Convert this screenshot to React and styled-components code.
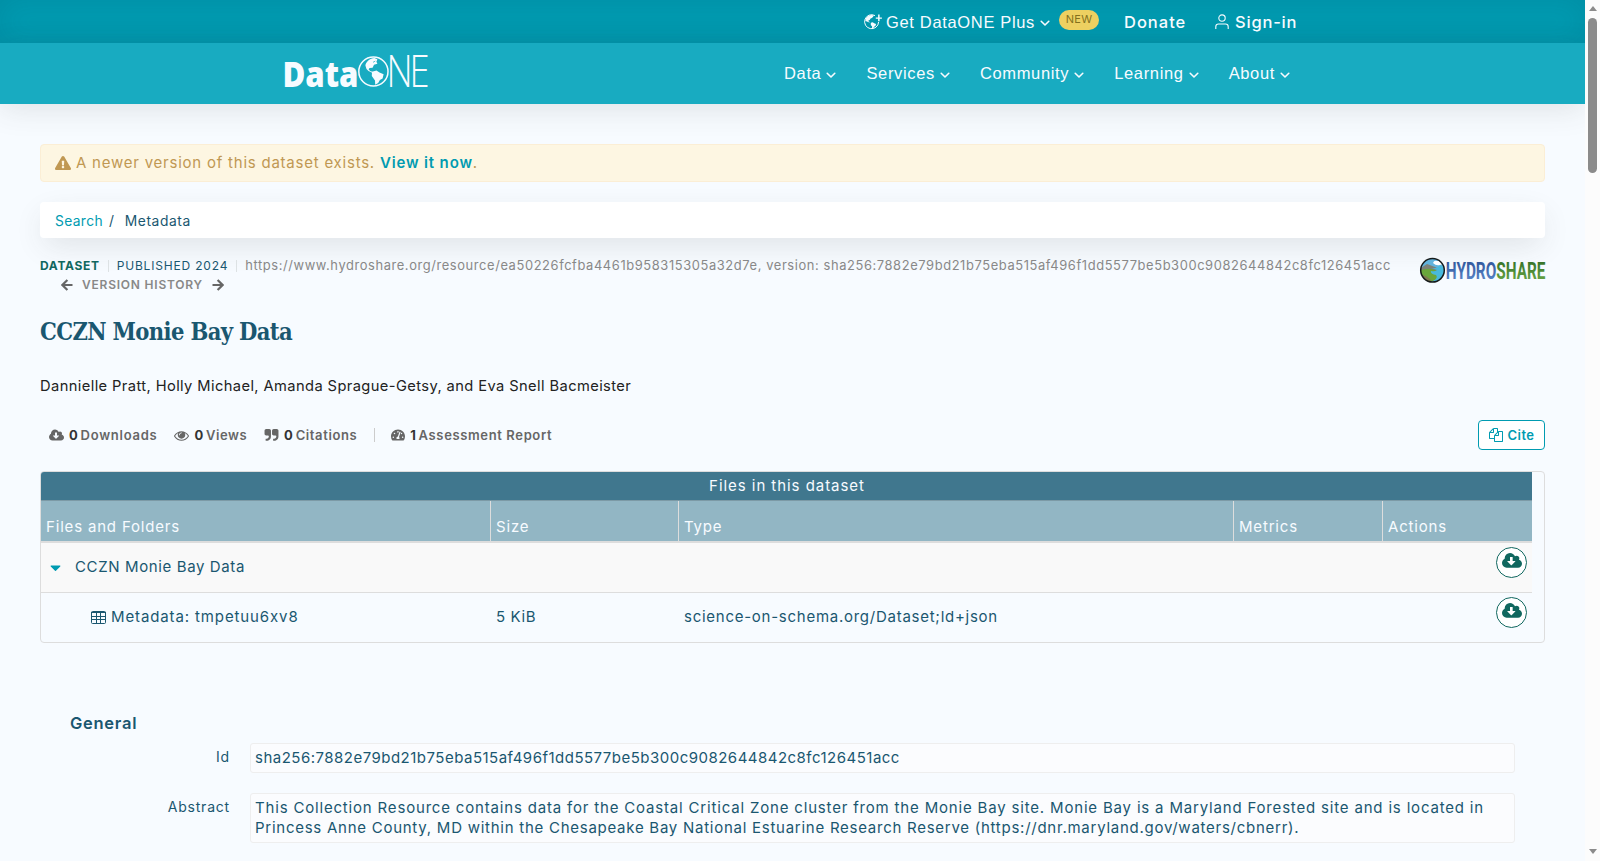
import React from 'react'
import styled, { createGlobalStyle } from 'styled-components';
import { FaCaretDown, FaExclamationTriangle, FaTachometerAlt } from 'react-icons/fa';

const paths = {
  cloud: ['0 0 1920 1792', 'M1280 928q0-14-9-23t-23-9h-224v-352q0-13-9.5-22.5t-22.5-9.5h-192q-13 0-22.5 9.5t-9.5 22.5v352h-224q-13 0-22.5 9.5t-9.5 22.5q0 14 9 23l352 352q9 9 23 9t23-9l351-351q10-12 10-24zm640 224q0 159-112.5 271.5t-271.5 112.5h-1088q-185 0-316.5-131.5t-131.5-316.5q0-130 70-240t188-165q-2-30-2-43 0-212 150-362t362-150q156 0 285.5 87t188.5 231q71-62 166-62 106 0 181 75t75 181q0 76-41 138 130 31 213.5 135.5t83.5 238.5z'],
  files: ['0 0 1792 1792', 'M1696 384q40 0 68 28t28 68v1216q0 40-28 68t-68 28h-960q-40 0-68-28t-28-68v-288h-544q-40 0-68-28t-28-68v-672q0-40 20-88t48-76l408-408q28-28 76-48t88-20h416q40 0 68 28t28 68v328q68-40 128-40h416zm-544 213l-299 299h299v-299zm-640-384l-299 299h299v-299zm196 647l316-316v-416h-384v416q0 40-28 68t-68 28h-416v640h512v-256q0-40 20-88t48-76zm956 804v-1152h-384v416q0 40-28 68t-68 28h-416v640h896z'],
  eye: ['0 0 1792 1792', 'M1664 960q-152-236-381-353 61 104 61 225 0 185-131.5 316.5t-316.5 131.5-316.5-131.5-131.5-316.5q0-121 61-225-229 117-381 353 133 205 333.5 326.5t434.5 121.5 434.5-121.5 333.5-326.5zm-720-384q0-20-14-34t-34-14q-125 0-214.5 89.5t-89.5 214.5q0 20 14 34t34 14 34-14 14-34q0-86 61-147t147-61q20 0 34-14t14-34zm848 384q0 34-20 69-140 230-376.5 368.5t-499.5 138.5-499.5-139-376.5-368q-20-35-20-69t20-69q140-229 376.5-368t499.5-139 499.5 139 376.5 368q20 35 20 69z'],
  quote: ['0 0 1792 1792', 'M832 320v704q0 104-40.5 198.5t-109.5 163.5-163.5 109.5-198.5 40.5h-64q-26 0-45-19t-19-45v-128q0-26 19-45t45-19h64q106 0 181-75t75-181v-32q0-40-28-68t-68-28h-224q-80 0-136-56t-56-136v-384q0-80 56-136t136-56h384q80 0 136 56t56 136zm896 0v704q0 104-40.5 198.5t-109.5 163.5-163.5 109.5-198.5 40.5h-64q-26 0-45-19t-19-45v-128q0-26 19-45t45-19h64q106 0 181-75t75-181v-32q0-40-28-68t-68-28h-224q-80 0-136-56t-56-136v-384q0-80 56-136t136-56h384q80 0 136 56t56 136z'],
};

function Icon({ name, size }) {
  const [box, d] = paths[name];
  return (
    <svg viewBox={box} width={size} height={size} fill="currentColor">
      <path d={d} />
    </svg>
  );
}

function Chevron() {
  return (
    <ChevronSvg viewBox="0 0 10 7" width="10" height="7">
      <path d="M1.2 1.3 5 5l3.8-3.7" fill="none" stroke="currentColor" strokeWidth="1.6" strokeLinecap="round" strokeLinejoin="round" />
    </ChevronSvg>
  );
}

function HistoryArrow({ right }) {
  return (
    <svg viewBox="0 0 12 12" width="12" height="12" fill="none" stroke="currentColor" strokeWidth="2.2">
      <path d={right ? 'M.5 6h9.6M5.6 1l5 5-5 5' : 'M11.5 6H1.9M6.4 1l-5 5 5 5'} />
    </svg>
  );
}

function GlobePlus() {
  return (
    <svg viewBox="0 0 18 16" width="18" height="16" fill="currentColor">
      <path d="M11 1.6A7 7 0 1 0 14.6 8" fill="none" stroke="currentColor" strokeWidth="1" />
      <path d="M1.4 6C2 3.3 4.4 1.2 7.6 1.1l2.2.5-.9 1.5-1 1-1.3.4-.9 1.5-1.3.4.2 1 1.3.7-.5.5-2-.9L1.6 7z" />
      <path d="M6.8 8.7l1.9-.5 1.5 1 1.9.7-.7 2-1.3.9-.9 1.6-1.2.3.1-2.1-1.3-1.6z" />
      <path d="M14.1.4h1.5v3h2.3v1.4h-2.3v2.5h-1.5V4.8h-2.3V3.4h2.3z" />
    </svg>
  );
}

function Person() {
  return (
    <svg viewBox="0 0 14 16" width="14" height="16" fill="none" stroke="currentColor" strokeWidth="1.1">
      <circle cx="7" cy="4.1" r="3.2" />
      <path d="M.8 15v-2.3q0-2.7 2.7-2.7h7q2.7 0 2.7 2.7V15" />
    </svg>
  );
}

function DataOneLogo() {
  return (
    <LogoSvg width="145" height="36" viewBox="0 0 145 36" fill="#f7fbff">
      <text x="-2.6" y="33.6" fontFamily="Open Sans, sans-serif" fontWeight="800" fontSize="35" textLength="76" lengthAdjust="spacingAndGlyphs">Data</text>
      <circle cx="88.4" cy="18.5" r="14.6" fill="#18abc1" stroke="#f7fbff" strokeWidth="1.5" />
      <path d="M80.4 12.5c.3-3.5 4.5-7.3 9-7.5l3 1.2-1 2.6 1 2-3.4 1-1.4 3-3 .3-1 1.2 1.5 1.8 2.4.6-.4 1-3.6-1.6-2-2.2z" />
      <path d="M87 18.8l4.5-1.2 3 1.8 4.1 1.8-1 4.2-2.7 1.6-1.7 3-3 1.8-.2-4.4-3.2-4.3z" />
      <path d="M88 9.3l2.3-1.2M92.2 7l1.8 1.7" stroke="#18abc1" strokeWidth=".7" />
      <text transform="translate(101.6 33.6) scale(.835 1)" fontFamily="Open Sans, sans-serif" fontWeight="300" fontSize="43.5" letterSpacing="-4">NE</text>
    </LogoSvg>
  );
}

function HydroShareLogo() {
  return (
    <LogoSvg width="126" height="27" viewBox="0 0 126 27">
      <defs>
        <linearGradient id="hydro" x1="0" y1="0" x2="0" y2="1">
          <stop offset=".2" stopColor="#345a9f" />
          <stop offset=".85" stopColor="#5a86c8" />
        </linearGradient>
        <linearGradient id="share" x1="0" y1="0" x2="0" y2="1">
          <stop offset=".2" stopColor="#39762c" />
          <stop offset=".85" stopColor="#68a544" />
        </linearGradient>
        <clipPath id="disc"><circle cx="13.5" cy="14.3" r="11.6" /></clipPath>
      </defs>
      <g clipPath="url(#disc)">
        <rect width="27" height="27" fill="#62b3dc" />
        <path d="M0 13 8 8l8 3 6 3v12H0z" fill="#7d8177" />
        <path d="M0 15q9-4 17-.5l6 2.5-4 5-9 5H0z" fill="#69a63b" />
        <path d="M12 12q7 1 8-3l6 3v9l-6 6-9-1q9-3 6-7-6-1-5-4 4 1 6-1z" fill="#48b9dc" />
        <path d="M0 18q7 1 12 6l-1 3H0z" fill="#7f7a50" />
        <path d="M14 7q1-3 4-2 4-1 6 3l-3 1q-4 1-7-2z" fill="#fff" />
      </g>
      <circle cx="13.5" cy="14.3" r="11.8" fill="none" stroke="#161b1b" strokeWidth="1.5" />
      <text x="26.8" y="23.2" fontFamily="Roboto, sans-serif" fontWeight="700" fontSize="24" textLength="99.6" lengthAdjust="spacingAndGlyphs">
        <tspan fill="url(#hydro)">HYDRO</tspan><tspan fill="url(#share)">SHARE</tspan>
      </text>
    </LogoSvg>
  );
}

function GridIcon() {
  return (
    <svg width="15" height="13" viewBox="0 0 15 13">
      <rect x=".5" y=".5" width="14" height="12" rx="1" fill="none" stroke="currentColor" />
      <path d="M0 1.5h15M0 5.5h15M0 8.5h15M5.5 2v11M9.5 2v11" fill="none" stroke="currentColor" />
    </svg>
  );
}

function App() {
  return (
    <Window>
      <GlobalStyle />
      <Page>
        <TopBar>
          <PlusLink><GlobePlus /><NavText $ls={0.66}>Get DataONE Plus</NavText><Chevron /></PlusLink>
          <NewBadge>NEW</NewBadge>
          <DonateLink>Donate</DonateLink>
          <SignIn><Person />Sign-in</SignIn>
        </TopBar>
        <NavBar>
          <DataOneLogo />
          <Menu>
            <MenuItem><NavText>Data</NavText><Chevron /></MenuItem>
            <MenuItem><NavText>Services</NavText><Chevron /></MenuItem>
            <MenuItem><NavText>Community</NavText><Chevron /></MenuItem>
            <MenuItem><NavText>Learning</NavText><Chevron /></MenuItem>
            <MenuItem><NavText>About</NavText><Chevron /></MenuItem>
          </Menu>
        </NavBar>
        <Content>
          <Alert>
            <FaExclamationTriangle size={16} />
            <span>A newer version of this dataset exists. <ViewLink>View it now</ViewLink>.</span>
          </Alert>
          <Breadcrumb>
            <Crumb $link $ls={0.36}>Search</Crumb>
            <Slash>/</Slash>
            <Crumb $ls={0.6}>Metadata</Crumb>
          </Breadcrumb>
          <MetaRow>
            <MetaText>
              <MetaLine>
                <Kind>DATASET</Kind>
                <Bar />
                <Published>PUBLISHED 2024</Published>
                <Bar />
                <Identifier>https://www.hydroshare.org/resource/ea50226fcfba4461b958315305a32d7e, version: sha256:7882e79bd21b75eba515af496f1dd5577be5b300c9082644842c8fc126451acc</Identifier>
              </MetaLine>
              <History><HistoryArrow /><span>VERSION HISTORY</span><HistoryArrow right /></History>
            </MetaText>
            <HydroShareLogo />
          </MetaRow>
          <Title>CCZN Monie Bay Data</Title>
          <Authors>Dannielle Pratt, Holly Michael, Amanda Sprague-Getsy, and Eva Snell Bacmeister</Authors>
          <Stats>
            <Stat><Icon name="cloud" size={15} /><Count>0</Count><Label $ls={0.75}>Downloads</Label></Stat>
            <Stat><Icon name="eye" size={15} /><Count>0</Count><Label>Views</Label></Stat>
            <Stat><Icon name="quote" size={15} /><Count>0</Count><Label $ls={0.6}>Citations</Label></Stat>
            <StatBar />
            <Stat><FaTachometerAlt size={14} /><Count>1</Count><Label $ls={0.63}>Assessment Report</Label></Stat>
            <CiteButton><Icon name="files" size={14} />Cite</CiteButton>
          </Stats>
          <TableFrame>
            <TableTitle>Files in this dataset</TableTitle>
            <HeadRow>
              <HeadCell>Files and Folders</HeadCell>
              <HeadCell>Size</HeadCell>
              <HeadCell>Type</HeadCell>
              <HeadCell>Metrics</HeadCell>
              <HeadCell>Actions</HeadCell>
            </HeadRow>
            <Row $folder>
              <NameCell $ls={0.62}><Caret><FaCaretDown size={17} /></Caret>CCZN Monie Bay Data</NameCell>
              <Cell /><Cell /><Cell />
              <ActionCell><Download><Icon name="cloud" size={20} /></Download></ActionCell>
            </Row>
            <Row>
              <NameCell $child $ls={0.88}><GridIcon />Metadata: tmpetuu6xv8</NameCell>
              <Cell $ls={0.6}>5 KiB</Cell>
              <Cell $ls={0.74}>science-on-schema.org/Dataset;ld+json</Cell>
              <Cell />
              <ActionCell><Download><Icon name="cloud" size={20} /></Download></ActionCell>
            </Row>
          </TableFrame>
          <Section>
            <SectionTitle>General</SectionTitle>
            <Field>
              <FieldLabel>Id</FieldLabel>
              <FieldValue $ls={0.485}>sha256:7882e79bd21b75eba515af496f1dd5577be5b300c9082644842c8fc126451acc</FieldValue>
            </Field>
            <Field>
              <FieldLabel>Abstract</FieldLabel>
              <FieldValue $ls={0.82}>
                This Collection Resource contains data for the Coastal Critical Zone cluster from the Monie Bay site. Monie Bay is a Maryland Forested site and is located in<br />
                <Tight>Princess Anne County, MD within the Chesapeake Bay National Estuarine Research Reserve (https://dnr.maryland.gov/waters/cbnerr).</Tight>
              </FieldValue>
            </Field>
          </Section>
        </Content>
      </Page>
      <Scrollbar>
        <Arrow />
        <Thumb />
        <Arrow $down />
      </Scrollbar>
    </Window>
  );
}
export default App;

const GlobalStyle = createGlobalStyle`
  * { box-sizing: border-box; }
  body { margin: 0; overflow: hidden; }
  svg { flex: none; display: block; }
`;
const Window = styled.div`
  display: flex;
  width: 1600px;
  height: 861px;
  overflow: hidden;
  background: #fcfcfc;
`;
const Page = styled.div`
  width: 1585px;
  height: 861px;
  overflow: hidden;
  background: #f7fbff;
  color: #1a5770;
  font: 400 15px/20px Inter, sans-serif;
  letter-spacing: 0.8px;
  white-space: nowrap;
`;
const LogoSvg = styled.svg`
  overflow: visible;
  letter-spacing: 0;
`;
const TopBar = styled.div`
  display: flex;
  align-items: center;
  height: 43px;
  padding-left: 864px;
  color: #f7fbff;
  background: #009bb1;
  box-shadow: inset 0 0 30px rgba(0, 80, 100, 0.17);
`;
const NavText = styled.span`
  font: 400 16.5px/20px "Liberation Sans", Arial, sans-serif;
  letter-spacing: ${p => p.$ls || 0.65}px;
`;
const ChevronSvg = styled.svg`
  margin-top: 4px;
`;
const PlusLink = styled.div`
  display: flex;
  align-items: center;
  width: 195px;
  gap: 4px;
  ${ChevronSvg} { margin-left: 1px; }
`;
const NewBadge = styled.div`
  width: 40px;
  height: 20px;
  margin-top: -3px;
  border-radius: 10px;
  background: #edd061;
  color: #83701d;
  font-size: 11px;
  line-height: 19px;
  letter-spacing: 0.2px;
  text-align: center;
`;
const DonateLink = styled.div`
  width: 91px;
  margin: 1px 0 0 25px;
  font-size: 16.5px;
  font-weight: 500;
  letter-spacing: 1px;
`;
const SignIn = styled.div`
  display: flex;
  align-items: center;
  gap: 6px;
  font-size: 16.5px;
  font-weight: 500;
  letter-spacing: 0.8px;
`;
const NavBar = styled.div`
  display: flex;
  justify-content: space-between;
  height: 61px;
  padding: 10px 295px 0 285px;
  color: #f7fbff;
  background: #18abc1;
  box-shadow: 0 5px 30px rgba(60, 60, 60, 0.13);
`;
const Menu = styled.div`
  display: flex;
  gap: 30px;
  height: 40px;
`;
const MenuItem = styled.div`
  display: flex;
  align-items: center;
  gap: 5px;
`;
const Content = styled.div`
  display: flex;
  flex-direction: column;
  padding: 40px 40px 0;
`;
const Alert = styled.div`
  display: flex;
  align-items: center;
  gap: 5px;
  height: 38px;
  padding-left: 14px;
  border: 1px solid #fbeed5;
  border-radius: 4px;
  background: #fdf6e2;
  color: #c09853;
  letter-spacing: 0.77px;
`;
const ViewLink = styled.b`
  color: #009bb1;
  font-weight: 600;
  letter-spacing: 0.85px;
`;
const Breadcrumb = styled.div`
  display: flex;
  align-items: center;
  height: 36px;
  margin-top: 20px;
  padding: 1px 0 0 15px;
  border-radius: 4px;
  background: #fff;
  font-size: 13.8px;
  box-shadow: 0 10px 30px -5px rgba(60, 60, 60, 0.15);
`;
const Crumb = styled.span`
  color: ${p => p.$link ? '#009bb1' : '#1a5770'};
  letter-spacing: ${p => p.$ls}px;
`;
const Slash = styled.span`
  margin: 0 10px 0 6px;
`;
const MetaRow = styled.div`
  display: flex;
  justify-content: space-between;
  margin-top: 18px;
`;
const MetaText = styled.div`
  display: flex;
  flex-direction: column;
`;
const MetaLine = styled.div`
  display: flex;
  align-items: center;
  height: 19px;
  font-size: 12px;
`;
const Kind = styled.b`
  color: #10675f;
  letter-spacing: 0.68px;
`;
const Bar = styled.i`
  width: 1px;
  height: 12px;
  margin: 0 8px;
  background: #dde2e4;
`;
const Published = styled.span`
  letter-spacing: 0.82px;
`;
const Identifier = styled.span`
  color: #888;
  font-size: 12.9px;
  letter-spacing: 0.601px;
`;
const History = styled.div`
  display: flex;
  align-items: center;
  gap: 9px;
  height: 19px;
  padding-left: 21px;
  color: #666;
  span {
    color: #888;
    font-size: 12px;
    font-weight: 600;
    letter-spacing: 0.78px;
  }
`;
const Title = styled.h1`
  margin: 20px 0 0;
  font: 700 23.5px/36px "DejaVu Serif Condensed", "DejaVu Serif", serif;
  letter-spacing: -0.64px;
`;
const Authors = styled.div`
  margin-top: 25px;
  height: 22px;
  color: #222;
  font-size: 14.7px;
  line-height: 22px;
  letter-spacing: 0.396px;
`;
const Stats = styled.div`
  display: flex;
  align-items: center;
  height: 30px;
  margin-top: 23px;
  padding-left: 9px;
  color: #666;
  font-size: 13px;
  font-weight: 600;
`;
const Stat = styled.div`
  display: flex;
  align-items: center;
  margin-right: 17px;
`;
const Count = styled.span`
  margin: 0 2px 0 5px;
  color: #333;
  font-weight: 700;
`;
const Label = styled.span`
  letter-spacing: ${p => p.$ls || 0.53}px;
`;
const StatBar = styled.i`
  width: 1px;
  height: 14px;
  margin-right: 16px;
  background: #ccc;
`;
const CiteButton = styled.div`
  display: flex;
  align-items: center;
  justify-content: center;
  gap: 5px;
  width: 67px;
  height: 30px;
  margin-left: auto;
  border: 1px solid #009bb1;
  border-radius: 4px;
  background: #fff;
  color: #009bb1;
  letter-spacing: 0.45px;
`;
const TableFrame = styled.div`
  height: 172px;
  margin-top: 21px;
  padding-right: 12px;
  border: 1px solid #ddd;
  border-radius: 4px;
  overflow: hidden;
`;
const TableTitle = styled.div`
  height: 29px;
  padding-left: 1px;
  border-bottom: 1px solid #7c9aa6;
  background: #40778e;
  color: #f7fbff;
  line-height: 28px;
  letter-spacing: 0.95px;
  text-align: center;
`;
const columns = '449px 188px 555px 149px 150px';
const HeadRow = styled.div`
  display: grid;
  grid-template-columns: ${columns};
  height: 42px;
  border-bottom: 2px solid #ddd;
  background: #92b6c4;
  color: #f7fbff;
`;
const HeadCell = styled.div`
  padding: 16px 0 0 5px;
  border-left: 1px solid #ddd;
  letter-spacing: 0.82px;
  &:first-child {
    border-left: 0;
  }
`;
const Row = styled.div`
  display: grid;
  grid-template-columns: ${columns};
  height: 50px;
  border-bottom: 1px solid ${p => p.$folder ? '#ddd' : 'transparent'};
  background: ${p => p.$folder ? '#f9f9f9' : 'transparent'};
`;
const Cell = styled.div`
  padding: 14px 0 0 6px;
  letter-spacing: ${p => p.$ls || 0.8}px;
`;
const NameCell = styled.div`
  display: flex;
  align-items: center;
  gap: 5px;
  height: 48px;
  padding-left: ${p => p.$child ? 50 : 9}px;
  letter-spacing: ${p => p.$ls}px;
`;
const Caret = styled.span`
  display: flex;
  width: 20px;
  margin-left: -3px;
  margin-right: 3px;
  color: #009bb1;
`;
const ActionCell = styled.div`
  display: flex;
  justify-content: flex-end;
  padding: 4px 5px 0 0;
`;
const Download = styled.div`
  display: flex;
  justify-content: center;
  width: 31px;
  height: 31px;
  padding-top: 3px;
  border: 1px solid #10675f;
  border-radius: 50%;
  background: #fff;
  color: #10675f;
`;
const Section = styled.div`
  padding: 69px 30px 0;
`;
const SectionTitle = styled.h4`
  margin: 0 0 9px;
  font-size: 16.5px;
  font-weight: 600;
  line-height: 22px;
  letter-spacing: 0.72px;
`;
const Field = styled.div`
  display: flex;
  gap: 20px;
  margin-bottom: 20px;
`;
const FieldLabel = styled.div`
  width: 160px;
  padding-top: 4px;
  font-size: 14px;
  text-align: right;
`;
const FieldValue = styled.div`
  width: 1265px;
  padding: 4px;
  border: 1px solid #eee;
  border-radius: 3px;
  background: #fbfcfe;
  letter-spacing: ${p => p.$ls}px;
`;
const Tight = styled.span`
  letter-spacing: 0.74px;
`;
const Scrollbar = styled.div`
  display: flex;
  flex-direction: column;
  align-items: center;
  width: 15px;
  padding: 6px 0 7px;
  background: #fcfcfc;
`;
const Arrow = styled.div`
  width: 0;
  height: 0;
  margin-top: ${p => p.$down ? 'auto' : 0};
  border: 4.5px solid transparent;
  border-${p => p.$down ? 'top' : 'bottom'}: 5px solid #8b8b8b;
  border-${p => p.$down ? 'bottom' : 'top'}: 0;
`;
const Thumb = styled.div`
  width: 9px;
  height: 155px;
  margin-top: 7px;
  border-radius: 5px;
  background: #8b8b8b;
`;
